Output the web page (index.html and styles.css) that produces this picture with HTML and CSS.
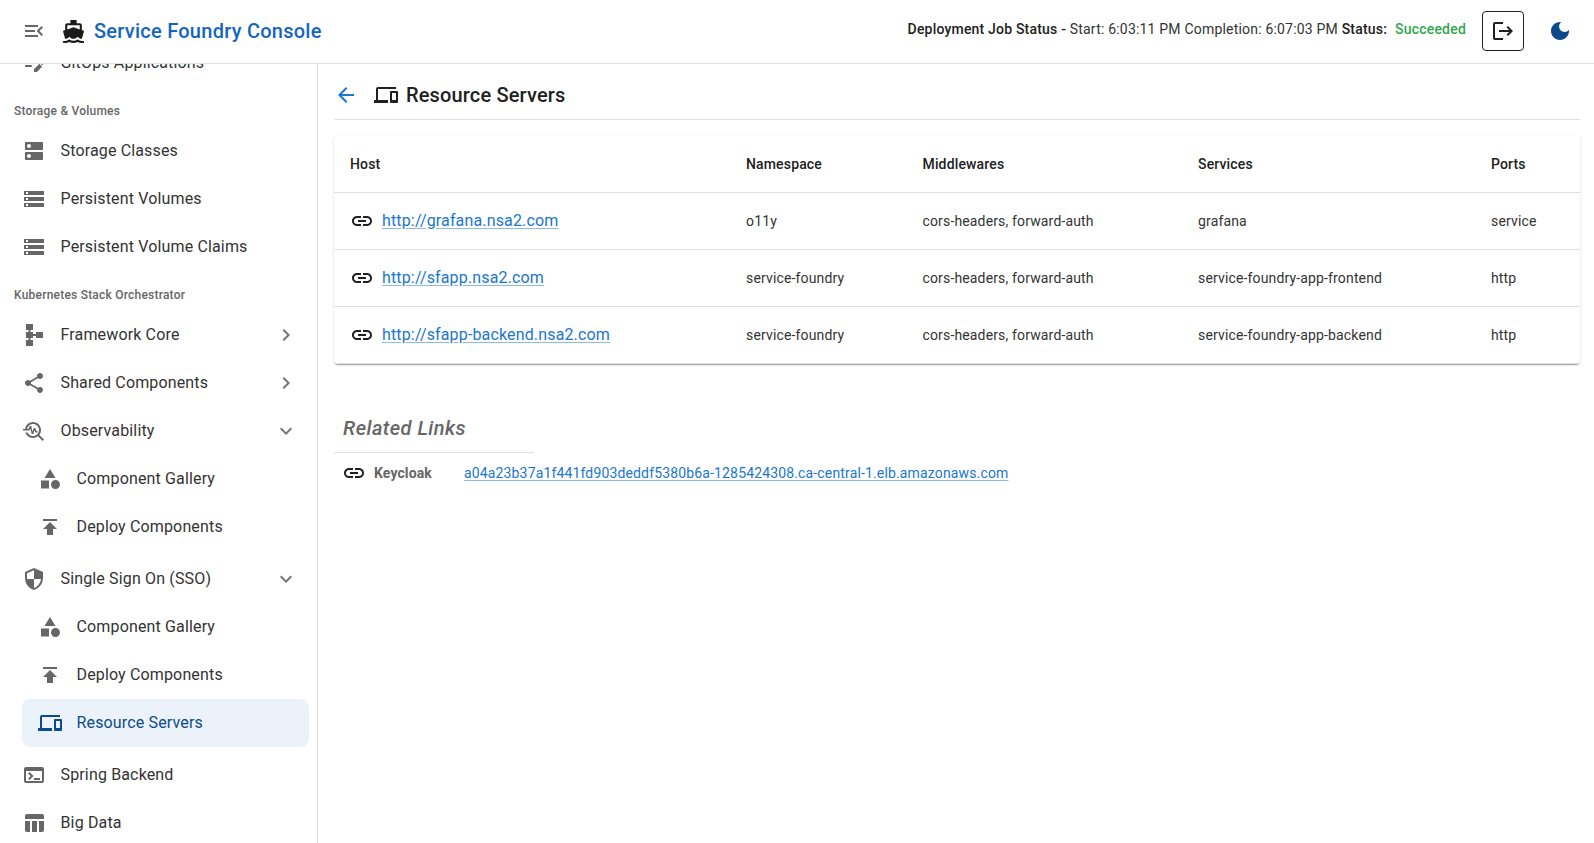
FILE: index.html
```html
<!DOCTYPE html>
<html lang="en">
<head>
<meta charset="utf-8">
<title>Service Foundry Console</title>
<link rel="stylesheet" href="styles.css">
</head>
<body>
<div class="app">
  <header class="topbar">
    <svg class="ic menu-ic" viewBox="0 0 24 24"><path d="M3 18h13v-2H3zm0-5h10v-2H3zm0-7v2h13V6zm18 9.59L17.42 12 21 8.41 19.59 7l-5 5 5 5z"/></svg>
    <svg class="ic boat-ic" viewBox="0 0 24 24"><path d="M20 21c-1.39 0-2.78-.47-4-1.32-2.44 1.71-5.56 1.71-8 0C6.78 20.53 5.39 21 4 21H2v2h2c1.38 0 2.74-.35 4-.99 2.52 1.29 5.48 1.29 8 0 1.26.65 2.62.99 4 .99h2v-2zM3.95 19H4c1.6 0 3.02-.88 4-2 .98 1.12 2.4 2 4 2s3.02-.88 4-2c.98 1.12 2.4 2 4 2h.05l1.89-6.68c.08-.26.06-.54-.06-.78s-.34-.42-.6-.5L20 10.62V6c0-1.1-.9-2-2-2h-3V1H9v3H6c-1.1 0-2 .9-2 2v4.62l-1.29.42c-.26.08-.48.26-.6.5s-.15.52-.06.78zM6 6h12v3.97L12 8 6 9.97z"/></svg>
    <div class="brand">Service Foundry Console</div>
    <div class="job-status">
      <span><b>Deployment Job Status - </b>Start: 6:03:11 PM Completion: 6:07:03 PM <b>Status:</b></span>
      <span class="ok">Succeeded</span>
    </div>
    <button class="logout" type="button" aria-label="Log out">
      <svg class="ic" viewBox="0 0 24 24"><path d="m17 7-1.41 1.41L18.17 11H8v2h10.17l-2.58 2.58L17 17l5-5zM4 5h8V3H4c-1.1 0-2 .9-2 2v14c0 1.1.9 2 2 2h8v-2H4z"/></svg>
    </button>
    <svg class="ic moon-ic" viewBox="0 0 24 24"><path d="M12 3c-4.97 0-9 4.03-9 9s4.03 9 9 9 9-4.03 9-9c0-.46-.04-.92-.1-1.36-.98 1.37-2.58 2.26-4.4 2.26-2.98 0-5.4-2.42-5.4-5.4 0-1.81.89-3.42 2.26-4.4-.44-.06-.9-.1-1.36-.1"/></svg>
  </header>
  <div class="body-row">
    <nav class="sidebar">
      <div class="nav-list">
        <div class="item"><svg class="ic" viewBox="0 0 24 24"><path d="M14 11c0 .55-.45 1-1 1H4c-.55 0-1-.45-1-1s.45-1 1-1h9c.55 0 1 .45 1 1M3 7c0 .55.45 1 1 1h9c.55 0 1-.45 1-1s-.45-1-1-1H4c-.55 0-1 .45-1 1m7 8c0-.55-.45-1-1-1H4c-.55 0-1 .45-1 1s.45 1 1 1h5c.55 0 1-.45 1-1m8.01-2.87.71-.71c.39-.39 1.02-.39 1.41 0l.71.71c.39.39.39 1.02 0 1.41l-.71.71zm-.71.71-5.3 5.3V21h2.86l5.3-5.3z"/></svg><span class="label">GitOps Applications</span></div>

        <div class="section">Storage &amp; Volumes</div>
        <div class="item"><svg class="ic" viewBox="0 0 24 24"><path d="M20 13H4c-.55 0-1 .45-1 1v6c0 .55.45 1 1 1h16c.55 0 1-.45 1-1v-6c0-.55-.45-1-1-1M7 19c-1.1 0-2-.9-2-2s.9-2 2-2 2 .9 2 2-.9 2-2 2M20 3H4c-.55 0-1 .45-1 1v6c0 .55.45 1 1 1h16c.55 0 1-.45 1-1V4c0-.55-.45-1-1-1M7 9c-1.1 0-2-.9-2-2s.9-2 2-2 2 .9 2 2-.9 2-2 2"/></svg><span class="label">Storage Classes</span></div>
        <div class="item"><svg class="ic" viewBox="0 0 24 24"><path d="M2 20h20v-4H2zm2-3h2v2H4zM2 4v4h20V4zm4 3H4V5h2zm-4 7h20v-4H2zm2-3h2v2H4z"/></svg><span class="label">Persistent Volumes</span></div>
        <div class="item"><svg class="ic" viewBox="0 0 24 24"><path d="M2 20h20v-4H2zm2-3h2v2H4zM2 4v4h20V4zm4 3H4V5h2zm-4 7h20v-4H2zm2-3h2v2H4z"/></svg><span class="label">Persistent Volume Claims</span></div>

        <div class="section">Kubernetes Stack Orchestrator</div>
        <div class="item"><svg class="ic" viewBox="0 0 24 24"><path d="M14 9v2h-3V9H8.5V7H11V1H4v6h2.5v2H4v6h2.5v2H4v6h7v-6H8.5v-2H11v-2h3v2h7V9z"/></svg><span class="label">Framework Core</span><svg class="ic chev" viewBox="0 0 24 24"><path d="M10 6 8.59 7.41 13.17 12l-4.58 4.59L10 18l6-6z"/></svg></div>
        <div class="item"><svg class="ic" viewBox="0 0 24 24"><path d="M18 16.08c-.76 0-1.44.3-1.96.77L8.91 12.7c.05-.23.09-.46.09-.7s-.04-.47-.09-.7l7.05-4.11c.54.5 1.25.81 2.04.81 1.66 0 3-1.34 3-3s-1.34-3-3-3-3 1.34-3 3c0 .24.04.47.09.7L8.04 9.81C7.5 9.31 6.79 9 6 9c-1.66 0-3 1.34-3 3s1.34 3 3 3c.79 0 1.5-.31 2.04-.81l7.12 4.16c-.05.21-.08.43-.08.65 0 1.61 1.31 2.92 2.92 2.92s2.92-1.31 2.92-2.92-1.31-2.92-2.92-2.92"/></svg><span class="label">Shared Components</span><svg class="ic chev" viewBox="0 0 24 24"><path d="M10 6 8.59 7.41 13.17 12l-4.58 4.59L10 18l6-6z"/></svg></div>
        <div class="item"><svg class="ic" viewBox="0 0 24 24"><path d="M22 20.59l-4.69-4.69C18.37 14.55 19 12.85 19 11c0-4.42-3.58-8-8-8-4.08 0-7.44 3.05-7.93 7h2.02C5.57 7.17 8.03 5 11 5c3.31 0 6 2.69 6 6s-2.69 6-6 6c-2.42 0-4.5-1.44-5.45-3.5H3.4C4.45 16.69 7.46 19 11 19c1.85 0 3.55-.63 4.9-1.69L20.59 22 22 20.59zM8.43 9.69L9.65 15h1.64l1.26-3.78.95 2.28h2V12h-1l-1.25-3h-1.54l-1.3 3.79L9.35 7H7.7l-1.25 3H1v1.5h6.45l.98-1.81z"/></svg><span class="label">Observability</span><svg class="ic chev" viewBox="0 0 24 24"><path d="M16.59 8.59 12 13.17 7.41 8.59 6 10l6 6 6-6z"/></svg></div>
        <div class="sub-group">
          <div class="item sub"><svg class="ic" viewBox="0 0 24 24"><path d="M12 2l-5.5 9h11zm5.5 11c-2.49 0-4.5 2.01-4.5 4.5s2.01 4.5 4.5 4.5 4.5-2.01 4.5-4.5-2.01-4.5-4.5-4.5M3 21.5h8v-8H3z"/></svg><span class="label">Component Gallery</span></div>
          <div class="item sub"><svg class="ic" viewBox="0 0 24 24"><path d="M5 4v2h14V4zm0 10h4v6h6v-6h4l-7-7z"/></svg><span class="label">Deploy Components</span></div>
        </div>
        <div class="item"><svg class="ic" viewBox="0 0 24 24"><path d="M12 1 3 5v6c0 5.55 3.84 10.74 9 12 5.16-1.26 9-6.45 9-12V5zm0 10.99h7c-.53 4.12-3.28 7.79-7 8.94V12H5V6.3l7-3.11z"/></svg><span class="label">Single Sign On (SSO)</span><svg class="ic chev" viewBox="0 0 24 24"><path d="M16.59 8.59 12 13.17 7.41 8.59 6 10l6 6 6-6z"/></svg></div>
        <div class="sub-group">
          <div class="item sub"><svg class="ic" viewBox="0 0 24 24"><path d="M12 2l-5.5 9h11zm5.5 11c-2.49 0-4.5 2.01-4.5 4.5s2.01 4.5 4.5 4.5 4.5-2.01 4.5-4.5-2.01-4.5-4.5-4.5M3 21.5h8v-8H3z"/></svg><span class="label">Component Gallery</span></div>
          <div class="item sub"><svg class="ic" viewBox="0 0 24 24"><path d="M5 4v2h14V4zm0 10h4v6h6v-6h4l-7-7z"/></svg><span class="label">Deploy Components</span></div>
          <div class="item sub active"><svg class="ic" viewBox="0 0 24 24"><path d="M4 6h18V4H4c-1.1 0-2 .9-2 2v11H0v3h14v-3H4zm19 2h-6c-.55 0-1 .45-1 1v10c0 .55.45 1 1 1h6c.55 0 1-.45 1-1V9c0-.55-.45-1-1-1m-1 9h-4v-7h4z"/></svg><span class="label">Resource Servers</span></div>
        </div>
        <div class="item"><svg class="ic" viewBox="0 0 24 24"><path d="M20 4H4c-1.1 0-2 .9-2 2v12c0 1.1.9 2 2 2h16c1.1 0 2-.9 2-2V6c0-1.1-.9-2-2-2m0 14H4V8h16zm-2-1h-6v-2h6zM7.5 17l-1.41-1.41L8.67 13l-2.59-2.59L7.5 9l4 4z"/></svg><span class="label">Spring Backend</span></div>
        <div class="item"><svg class="ic" viewBox="0 0 24 24"><path d="M10 10.02h5V21h-5zM17 21h3c1.1 0 2-.9 2-2v-9h-5zm3-18H5c-1.1 0-2 .9-2 2v3h19V5c0-1.1-.9-2-2-2M3 19c0 1.1.9 2 2 2h3V10H3z"/></svg><span class="label">Big Data</span></div>
      </div>
    </nav>
    <main class="content">
      <div class="page-head">
        <svg class="ic back-ic" viewBox="0 0 24 24"><path d="M20 11H7.83l5.59-5.59L12 4l-8 8 8 8 1.41-1.41L7.83 13H20z"/></svg>
        <svg class="ic head-ic" viewBox="0 0 24 24"><path d="M4 6h18V4H4c-1.1 0-2 .9-2 2v11H0v3h14v-3H4zm19 2h-6c-.55 0-1 .45-1 1v10c0 .55.45 1 1 1h6c.55 0 1-.45 1-1V9c0-.55-.45-1-1-1m-1 9h-4v-7h4z"/></svg>
        <h1 class="page-title">Resource Servers</h1>
      </div>
      <div class="card">
        <table class="grid">
          <colgroup>
            <col class="c-host"><col class="c-ns"><col class="c-mw"><col class="c-svc"><col class="c-port">
          </colgroup>
          <thead>
            <tr><th>Host</th><th>Namespace</th><th>Middlewares</th><th>Services</th><th>Ports</th></tr>
          </thead>
          <tbody>
            <tr>
              <td><div class="host"><svg class="ic" viewBox="0 0 24 24"><path d="M3.9 12c0-1.71 1.39-3.1 3.1-3.1h4V7H7c-2.76 0-5 2.24-5 5s2.24 5 5 5h4v-1.9H7c-1.71 0-3.1-1.39-3.1-3.1M8 13h8v-2H8zm9-6h-4v1.9h4c1.71 0 3.1 1.39 3.1 3.1s-1.39 3.1-3.1 3.1h-4V17h4c2.76 0 5-2.24 5-5s-2.24-5-5-5"/></svg><a href="#">http://grafana.nsa2.com</a></div></td>
              <td>o11y</td><td>cors-headers, forward-auth</td><td>grafana</td><td>service</td>
            </tr>
            <tr>
              <td><div class="host"><svg class="ic" viewBox="0 0 24 24"><path d="M3.9 12c0-1.71 1.39-3.1 3.1-3.1h4V7H7c-2.76 0-5 2.24-5 5s2.24 5 5 5h4v-1.9H7c-1.71 0-3.1-1.39-3.1-3.1M8 13h8v-2H8zm9-6h-4v1.9h4c1.71 0 3.1 1.39 3.1 3.1s-1.39 3.1-3.1 3.1h-4V17h4c2.76 0 5-2.24 5-5s-2.24-5-5-5"/></svg><a href="#">http://sfapp.nsa2.com</a></div></td>
              <td>service-foundry</td><td>cors-headers, forward-auth</td><td>service-foundry-app-frontend</td><td>http</td>
            </tr>
            <tr>
              <td><div class="host"><svg class="ic" viewBox="0 0 24 24"><path d="M3.9 12c0-1.71 1.39-3.1 3.1-3.1h4V7H7c-2.76 0-5 2.24-5 5s2.24 5 5 5h4v-1.9H7c-1.71 0-3.1-1.39-3.1-3.1M8 13h8v-2H8zm9-6h-4v1.9h4c1.71 0 3.1 1.39 3.1 3.1s-1.39 3.1-3.1 3.1h-4V17h4c2.76 0 5-2.24 5-5s-2.24-5-5-5"/></svg><a href="#">http://sfapp-backend.nsa2.com</a></div></td>
              <td>service-foundry</td><td>cors-headers, forward-auth</td><td>service-foundry-app-backend</td><td>http</td>
            </tr>
          </tbody>
        </table>
      </div>
      <section class="related">
        <h2 class="related-title">Related Links</h2>
        <div class="related-row">
          <svg class="ic" viewBox="0 0 24 24"><path d="M3.9 12c0-1.71 1.39-3.1 3.1-3.1h4V7H7c-2.76 0-5 2.24-5 5s2.24 5 5 5h4v-1.9H7c-1.71 0-3.1-1.39-3.1-3.1M8 13h8v-2H8zm9-6h-4v1.9h4c1.71 0 3.1 1.39 3.1 3.1s-1.39 3.1-3.1 3.1h-4V17h4c2.76 0 5-2.24 5-5s-2.24-5-5-5"/></svg>
          <span class="related-name">Keycloak</span>
          <a class="related-link" href="#">a04a23b37a1f441fd903deddf5380b6a-1285424308.ca-central-1.elb.amazonaws.com</a>
        </div>
      </section>
    </main>
  </div>
</div>
</body>
</html>
```
FILE: styles.css
```css
* { box-sizing: border-box; }
html, body { margin: 0; height: 100%; overflow: hidden; }
body { font-family: Roboto, "Liberation Sans", sans-serif; color: #212121; background: #fff; }
.ic { width: 24px; height: 24px; flex: none; fill: currentColor; display: block; }

.app { display: flex; flex-direction: column; height: 100vh; }

.topbar { flex: none; height: 64px; display: flex; align-items: center; padding: 0 22px 1px 22px; border-bottom: 1px solid #e0e0e0; background: #fff; position: relative; z-index: 2; }
.menu-ic { color: #666; }
.boat-ic { color: #1a1a1a; margin-left: 15px; width: 25px; height: 25px; }
.brand { margin-left: 8px; font-size: 20px; font-weight: 500; color: #1565c0; letter-spacing: .25px; }
.job-status { margin-left: auto; display: flex; gap: 8px; font-size: 14px; color: #333; letter-spacing: .195px; padding-bottom: 4px; }
.job-status b { font-weight: 500; color: #212121; }
.ok { color: #2ea84a; font-weight: 500; }
.logout { margin-left: 16px; width: 42px; height: 40px; padding: 0; display: flex; align-items: center; justify-content: center; background: #fff; border: 1px solid #212121; border-radius: 4px; color: #212121; }
.moon-ic { color: #0d4a8c; margin-left: 24px; }

.body-row { flex: 1; display: flex; min-height: 0; }
.sidebar { flex: none; width: 318px; border-right: 1px solid #e0e0e0; overflow: hidden; }
.nav-list { margin-top: -25px; }
.section { height: 40px; padding: 16px 0 8px 14px; font-size: 12px; line-height: 16px; font-weight: 500; color: #666; letter-spacing: .22px; }
.item { height: 48px; margin: 0 8px 0 22px; display: flex; align-items: center; color: #666; border-radius: 8px; padding-right: 10px; }
.item.sub { padding-left: 16px; }
.label { margin-left: 14.5px; padding-bottom: 2px; flex: 1; font-size: 16px; color: #333; letter-spacing: .15px; white-space: nowrap; }
.chev { color: #757575; margin-right: 1px; }
.sub-group { padding-bottom: 4px; }
.active { background: #ebf2fa; color: #0d4a8c; }
.active .label { color: #0d4a8c; }

.content { flex: 1; min-width: 0; padding: 11px 14px 0 16px; }
.page-head { height: 45px; padding-bottom: 4px; display: flex; align-items: center; border-bottom: 1px solid #e0e0e0; }
.back-ic { color: #1976d2; }
.head-ic { color: #212121; margin-left: 16px; }
.page-title { margin: 0 0 0 8px; font-size: 20px; font-weight: 500; color: #212121; letter-spacing: .15px; }

.card { margin-top: 16px; background: #fff; border-radius: 4px; box-shadow: 0 2px 1px -1px rgba(0,0,0,.2), 0 1px 1px 0 rgba(0,0,0,.14), 0 1px 3px 0 rgba(0,0,0,.12); overflow: hidden; }
.grid { width: 100%; table-layout: fixed; border-collapse: separate; border-spacing: 0; font-size: 14px; letter-spacing: .15px; color: #333; }
.c-host { width: 396px; }
.c-ns { width: 176.5px; }
.c-mw { width: 275.5px; }
.c-svc { width: 293px; }
.grid th, .grid td { height: 57px; padding: 0 16px; border-bottom: 1px solid #e0e0e0; text-align: left; white-space: nowrap; }
.grid th { font-weight: 500; color: #212121; }
.host { display: flex; align-items: center; gap: 8px; color: #212121; }
.host a { padding-bottom: 2px; font-size: 16px; color: #1976d2; text-decoration: underline; text-decoration-color: rgba(25,118,210,.5); text-underline-offset: 2px; }

.related { margin-top: 50px; }
.related-title { width: 200px; height: 39px; margin: 0; padding: 0 0 10px 9px; font-size: 20px; line-height: 28px; font-weight: 500; font-style: italic; color: #666; border-bottom: 1px solid #e0e0e0; letter-spacing: .46px; }
.related-row { margin-top: 8px; height: 24px; display: flex; align-items: center; padding-left: 8px; color: #212121; }
.related-name { margin-left: 8px; width: 90px; font-size: 14px; font-weight: 700; color: #666; letter-spacing: .1px; }
.related-link { font-size: 14px; color: #1976d2; letter-spacing: .15px; text-decoration: underline; text-decoration-color: rgba(25,118,210,.5); text-underline-offset: 2px; }
```
